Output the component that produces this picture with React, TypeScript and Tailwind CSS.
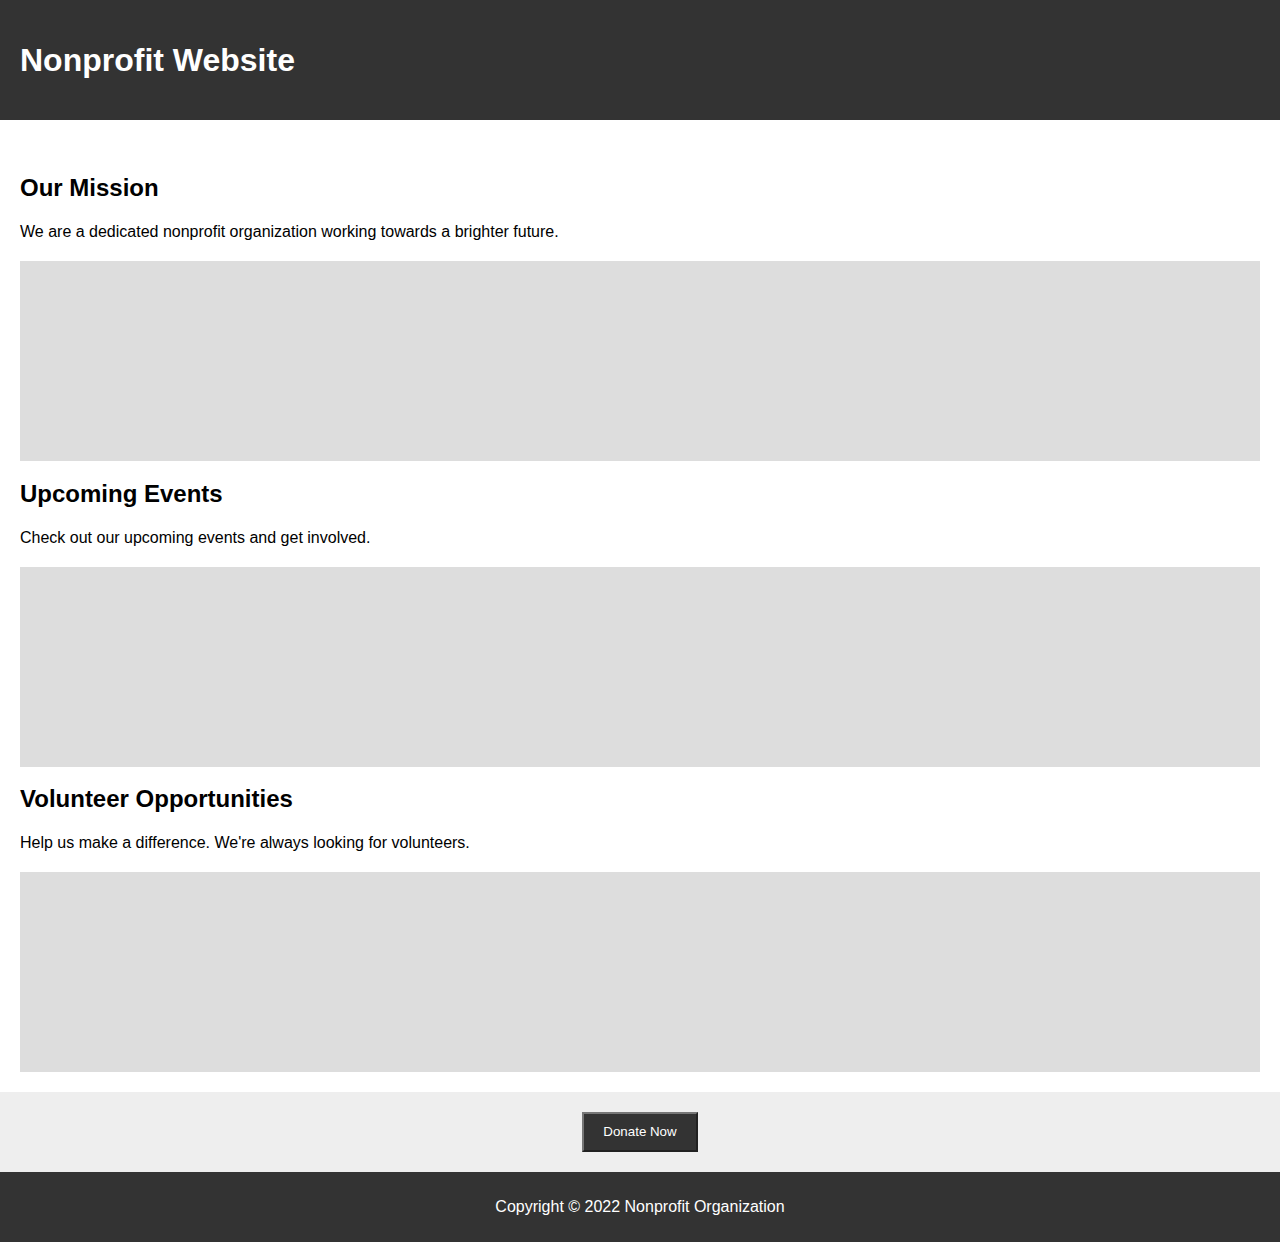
const sections = [
  {
    title: 'Our Mission',
    text: 'We are a dedicated nonprofit organization working towards a brighter future.',
  },
  {
    title: 'Upcoming Events',
    text: 'Check out our upcoming events and get involved.',
  },
  {
    title: 'Volunteer Opportunities',
    text: "Help us make a difference. We're always looking for volunteers.",
  },
]

function Section({ title, text }: { title: string; text: string }) {
  return (
    <section className="mb-[18.5px] last:mb-0">
      <h2 className="text-2xl font-bold leading-[28px] mb-5">{title}</h2>
      <p className="text-base leading-[20px] mb-[19px]">{text}</p>
      <div className="h-[200px] w-full bg-[#dddddd]" />
    </section>
  )
}

export default function App() {
  return (
    <div className="min-h-screen bg-white text-black font-['Liberation_Sans',Arial,sans-serif]">
      <header className="h-[120px] bg-[#333333] px-5 flex items-center">
        <h1 className="text-[32px] font-bold text-white leading-[37px]">Nonprofit Website</h1>
      </header>

      <main className="px-5 pt-[54px] pb-5">
        {sections.map((s) => (
          <Section key={s.title} title={s.title} text={s.text} />
        ))}
      </main>

      <div className="h-[80px] bg-[#eeeeee] flex items-center justify-center">
        <button className="h-10 w-[116px] bg-[#333333] text-white text-[13.33px] border-2 [border-style:outset] border-[#767676]">
          Donate Now
        </button>
      </div>

      <footer className="h-[70px] bg-[#333333] text-white flex items-center justify-center">
        <p className="text-base">Copyright © 2022 Nonprofit Organization</p>
      </footer>
    </div>
  )
}
